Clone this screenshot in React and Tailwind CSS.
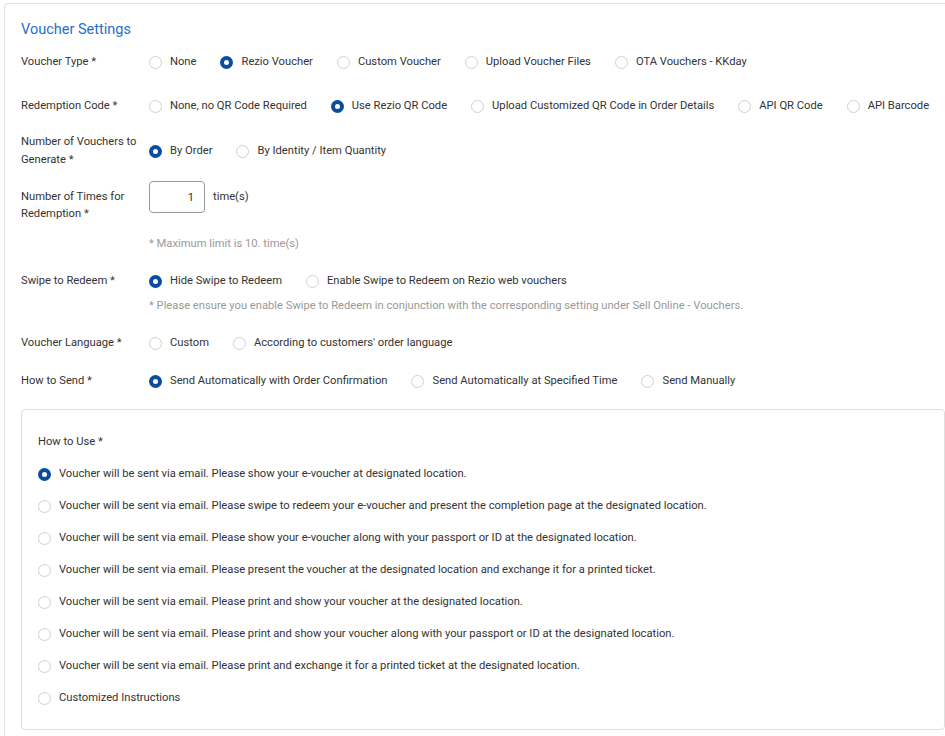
import { useState } from "react";

function Radio({ checked, label, onClick }) {
  return (
    <label className="flex items-center gap-2 cursor-pointer" onClick={onClick}>
      {checked ? (
        <span className="flex h-[13px] w-[13px] shrink-0 items-center justify-center rounded-full bg-[#0b4c9c]">
          <span className="h-[5px] w-[5px] rounded-full bg-white" />
        </span>
      ) : (
        <span className="h-[13px] w-[13px] shrink-0 rounded-full border border-[#d0d0d0] bg-white" />
      )}
      <span className="whitespace-nowrap">{label}</span>
    </label>
  );
}

function RadioGroup({ options, value, onChange }) {
  return (
    <div className="flex items-center gap-6">
      {options.map((o, i) => (
        <Radio key={o} label={o} checked={value === i} onClick={() => onChange(i)} />
      ))}
    </div>
  );
}

const howToUse = [
  "Voucher will be sent via email. Please show your e-voucher at designated location.",
  "Voucher will be sent via email. Please swipe to redeem your e-voucher and present the completion page at the designated location.",
  "Voucher will be sent via email. Please show your e-voucher along with your passport or ID at the designated location.",
  "Voucher will be sent via email. Please present the voucher at the designated location and exchange it for a printed ticket.",
  "Voucher will be sent via email. Please print and show your voucher at the designated location.",
  "Voucher will be sent via email. Please print and show your voucher along with your passport or ID at the designated location.",
  "Voucher will be sent via email. Please print and exchange it for a printed ticket at the designated location.",
  "Customized Instructions",
];

export default function App() {
  const [type, setType] = useState(1);
  const [code, setCode] = useState(1);
  const [count, setCount] = useState(0);
  const [swipe, setSwipe] = useState(0);
  const [lang, setLang] = useState(-1);
  const [send, setSend] = useState(0);
  const [use, setUse] = useState(0);

  return (
    <div className="h-[736px] w-[945px] overflow-hidden bg-white pl-[4px] pt-[3px] font-['Roboto',sans-serif] text-[11.2px] leading-[18px] text-[#333]">
      <div className="w-[958px] rounded border border-[#dedede] px-4 pt-[16px] pb-6">
        {/* Title */}
        <h2 className="text-[14.5px] leading-[20px] text-[#1f6fc8]">Voucher Settings</h2>

        {/* Voucher Type */}
        <div className="mt-[13px] flex items-center">
          <div className="w-[128px] shrink-0">Voucher Type *</div>
          <RadioGroup
            value={type}
            onChange={setType}
            options={["None", "Rezio Voucher", "Custom Voucher", "Upload Voucher Files", "OTA Vouchers - KKday"]}
          />
        </div>

        {/* Redemption Code */}
        <div className="mt-[26px] flex items-center">
          <div className="w-[128px] shrink-0">Redemption Code *</div>
          <RadioGroup
            value={code}
            onChange={setCode}
            options={[
              "None, no QR Code Required",
              "Use Rezio QR Code",
              "Upload Customized QR Code in Order Details",
              "API QR Code",
              "API Barcode",
            ]}
          />
        </div>

        {/* Number of vouchers */}
        <div className="mt-[18px] flex items-center">
          <div className="w-[128px] shrink-0 pr-2">Number of Vouchers to Generate *</div>
          <RadioGroup value={count} onChange={setCount} options={["By Order", "By Identity / Item Quantity"]} />
        </div>

        {/* Number of times */}
        <div className="mt-[12px] flex items-start">
          <div className="w-[128px] shrink-0 pt-[7px] pr-4 leading-[17px]">Number of Times for Redemption *</div>
          <div className="flex items-center gap-2">
            <input
              defaultValue="1"
              className="h-[32px] w-[56px] rounded border border-[#9a9a9a] px-[10px] text-right text-[11.2px] text-[#333] outline-none"
            />
            <span>time(s)</span>
          </div>
        </div>
        <div className="mt-[13px] ml-[128px] text-[#999]">* Maximum limit is 10. time(s)</div>

        {/* Swipe to Redeem */}
        <div className="mt-[19px] flex items-center">
          <div className="w-[128px] shrink-0">Swipe to Redeem *</div>
          <RadioGroup
            value={swipe}
            onChange={setSwipe}
            options={["Hide Swipe to Redeem", "Enable Swipe to Redeem on Rezio web vouchers"]}
          />
        </div>
        <div className="mt-[7px] ml-[128px] text-[#999]">
          * Please ensure you enable Swipe to Redeem in conjunction with the corresponding setting under Sell Online - Vouchers.
        </div>

        {/* Voucher Language */}
        <div className="mt-[19px] flex items-center">
          <div className="w-[128px] shrink-0">Voucher Language *</div>
          <RadioGroup value={lang} onChange={setLang} options={["Custom", "According to customers' order language"]} />
        </div>

        {/* How to Send */}
        <div className="mt-[20px] flex items-center">
          <div className="w-[128px] shrink-0">How to Send *</div>
          <RadioGroup
            value={send}
            onChange={setSend}
            options={["Send Automatically with Order Confirmation", "Send Automatically at Specified Time", "Send Manually"]}
          />
        </div>

        {/* How to Use */}
        <div className="mt-[19px] rounded border border-[#dedede] px-4 pt-[23px] pb-[22px]">
          <div>How to Use *</div>
          <div className="mt-[14px] flex flex-col gap-[14px]">
            {howToUse.map((t, i) => (
              <Radio key={i} label={t} checked={use === i} onClick={() => setUse(i)} />
            ))}
          </div>
        </div>
      </div>
    </div>
  );
}
